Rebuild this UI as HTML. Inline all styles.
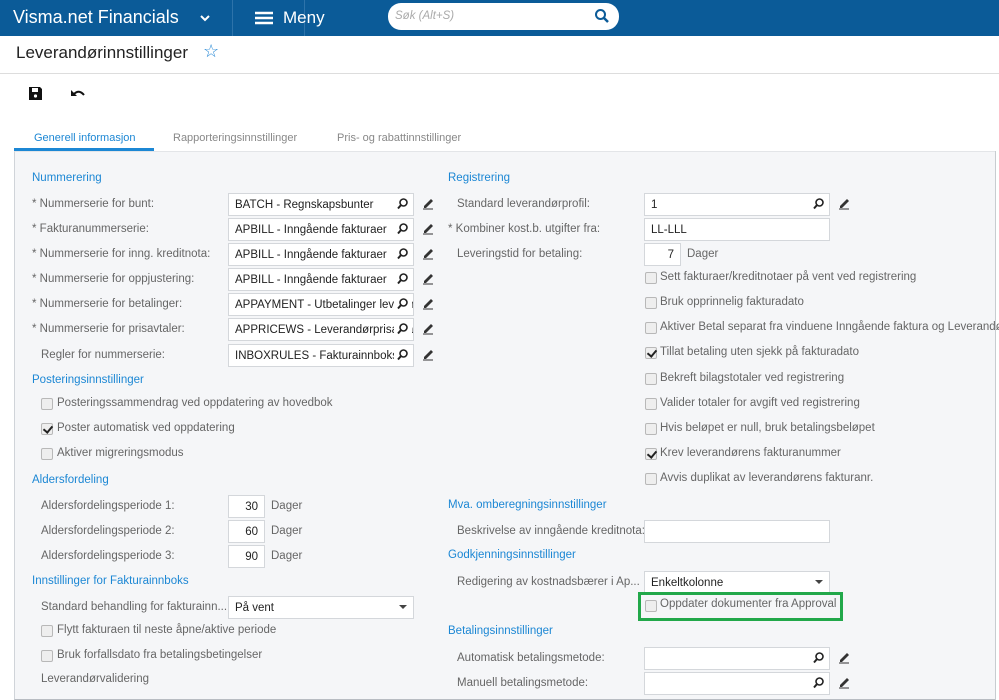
<!DOCTYPE html>
<html><head><meta charset="utf-8"><style>
*{margin:0;padding:0;box-sizing:border-box}
body{width:999px;height:700px;overflow:hidden;background:#fff;font-family:"Liberation Sans",sans-serif;position:relative;font-size:11.5px;color:#555}
.a{position:absolute;white-space:nowrap}
.hdr{position:absolute;left:0;top:0;width:999px;height:36px;background:#0b5b98}
.h{color:#1c87d4;font-size:11.5px}
.l{color:#666;font-size:11.5px}
.in{position:absolute;background:#fff;border:1px solid #d4d7db;height:23px;color:#222;font-size:11.5px;padding:5px 6px 3px 6px;white-space:nowrap;overflow:hidden}
.cb{position:absolute;width:12px;height:12px;border:1px solid #b8b8b8;border-radius:2px;background:#eee}
.ck::after{content:"";position:absolute;left:3px;top:0px;width:4px;height:7px;border:solid #222;border-width:0 2px 2px 0;transform:rotate(40deg)}
</style></head><body>
<div class="hdr"></div>
<div class="a" style="left:13px;top:7px;color:#fff;font-size:18px">Visma.net Financials</div>
<svg class="a" style="left:199px;top:14px" width="12" height="8"><path d="M2 2l4 4 4-4" stroke="#fff" stroke-width="2" fill="none"/></svg>
<div class="a" style="left:232px;top:0;width:1px;height:36px;background:#2d73aa"></div>
<div class="a" style="left:304px;top:0;width:1px;height:36px;background:#2d73aa"></div>
<svg class="a" style="left:255px;top:11px" width="18" height="14"><path d="M0 2h18M0 7h18M0 12h18" stroke="#fff" stroke-width="2.5"/></svg>
<div class="a" style="left:283px;top:8px;color:#fff;font-size:17px">Meny</div>
<div class="a" style="left:388px;top:3px;width:231px;height:27px;background:#fff;border-radius:13px"></div>
<div class="a" style="left:395px;top:10px;color:#aaa;font-size:11.5px;font-style:italic">Søk (Alt+S)</div>
<svg class="a" style="left:594px;top:8px" width="16" height="16"><circle cx="6.5" cy="6.5" r="4.5" stroke="#0b5b98" stroke-width="2" fill="none"/><path d="M10 10l4 4" stroke="#0b5b98" stroke-width="2.5"/></svg>
<div class="a" style="left:16px;top:43px;color:#222;font-size:17px">Leverandørinnstillinger</div>
<div class="a" style="left:203px;top:41px;color:#2a8ad6;font-size:18px">☆</div>
<div class="a" style="left:0;top:73px;width:999px;height:1px;background:#ddd"></div>
<svg class="a" style="left:29px;top:87px" width="13" height="13"><path d="M0 0h11l2 2v11H0z" fill="#111"/><rect x="3" y="1" width="6" height="4" fill="#fff"/><circle cx="6.5" cy="9" r="1.6" fill="#fff"/></svg>
<svg class="a" style="left:71px;top:88px" width="16" height="10"><path d="M3 6 Q8 1 13 7" stroke="#111" stroke-width="2" fill="none"/><path d="M0 2v6h6z" fill="#111"/></svg>
<div class="a" style="left:34px;top:132px;color:#1c87d4;font-size:11px">Generell informasjon</div>
<div class="a" style="left:173px;top:132px;color:#888;font-size:11px">Rapporteringsinnstillinger</div>
<div class="a" style="left:337px;top:132px;color:#888;font-size:11px">Pris- og rabattinnstillinger</div>
<div class="a" style="left:14px;top:151px;width:981px;height:549px;background:#f5f6f8;border-left:1px solid #d0d4d9;border-top:1px solid #e3e5e8;border-bottom:1px solid #b8bcc2"></div>
<div class="a" style="left:14px;top:148px;width:140px;height:3px;background:#1c87d4"></div>
<div class="a" style="left:995px;top:151px;width:1px;height:549px;background:#c8ccd0"></div>

<div style="position:absolute;left:0;top:1px;width:999px;height:699px">
<div class="a h" style="left:32px;top:171px">Nummerering</div>
<div class="a l" style="left:32px;top:197px">* Nummerserie for bunt:</div>
<div class="a l" style="left:32px;top:222px">* Fakturanummerserie:</div>
<div class="a l" style="left:32px;top:247px">* Nummerserie for inng. kreditnota:</div>
<div class="a l" style="left:32px;top:272px">* Nummerserie for oppjustering:</div>
<div class="a l" style="left:32px;top:297px">* Nummerserie for betalinger:</div>
<div class="a l" style="left:32px;top:322px">* Nummerserie for prisavtaler:</div>
<div class="a l" style="left:41px;top:348px">Regler for nummerserie:</div>
<div class="a h" style="left:32px;top:373px">Posteringsinnstillinger</div>
<div class="a l" style="left:57px;top:396px">Posteringssammendrag ved oppdatering av hovedbok</div>
<div class="a l" style="left:57px;top:421px">Poster automatisk ved oppdatering</div>
<div class="a l" style="left:57px;top:446px">Aktiver migreringsmodus</div>
<div class="a h" style="left:32px;top:473px">Aldersfordeling</div>
<div class="a l" style="left:41px;top:499px">Aldersfordelingsperiode 1:</div>
<div class="a l" style="left:41px;top:524px">Aldersfordelingsperiode 2:</div>
<div class="a l" style="left:41px;top:549px">Aldersfordelingsperiode 3:</div>
<div class="a l" style="left:271px;top:499px">Dager</div>
<div class="a l" style="left:271px;top:524px">Dager</div>
<div class="a l" style="left:271px;top:549px">Dager</div>
<div class="a h" style="left:32px;top:574px">Innstillinger for Fakturainnboks</div>
<div class="a l" style="left:41px;top:600px">Standard behandling for fakturainn...</div>
<div class="a l" style="left:57px;top:623px">Flytt fakturaen til neste åpne/aktive periode</div>
<div class="a l" style="left:57px;top:648px">Bruk forfallsdato fra betalingsbetingelser</div>
<div class="a l" style="left:41px;top:672px">Leverandørvalidering</div>
<div class="a h" style="left:448px;top:171px">Registrering</div>
<div class="a l" style="left:457px;top:197px">Standard leverandørprofil:</div>
<div class="a l" style="left:448px;top:222px">* Kombiner kost.b. utgifter fra:</div>
<div class="a l" style="left:457px;top:247px">Leveringstid for betaling:</div>
<div class="a l" style="left:687px;top:247px">Dager</div>
<div class="a l" style="left:660px;top:270px">Sett fakturaer/kreditnotaer på vent ved registrering</div>
<div class="a l" style="left:660px;top:295px">Bruk opprinnelig fakturadato</div>
<div class="a l" style="left:660px;top:320px">Aktiver Betal separat fra vinduene Inngående faktura og Leverandør</div>
<div class="a l" style="left:660px;top:345px">Tillat betaling uten sjekk på fakturadato</div>
<div class="a l" style="left:660px;top:371px">Bekreft bilagstotaler ved registrering</div>
<div class="a l" style="left:660px;top:396px">Valider totaler for avgift ved registrering</div>
<div class="a l" style="left:660px;top:421px">Hvis beløpet er null, bruk betalingsbeløpet</div>
<div class="a l" style="left:660px;top:446px">Krev leverandørens fakturanummer</div>
<div class="a l" style="left:660px;top:471px">Avvis duplikat av leverandørens fakturanr.</div>
<div class="a h" style="left:448px;top:498px">Mva. omberegningsinnstillinger</div>
<div class="a l" style="left:457px;top:524px">Beskrivelse av inngående kreditnota:</div>
<div class="a h" style="left:448px;top:548px">Godkjenningsinnstillinger</div>
<div class="a l" style="left:457px;top:575px">Redigering av kostnadsbærer i Ap...</div>
<div class="a l" style="left:660px;top:597px">Oppdater dokumenter fra Approval</div>
<div class="a h" style="left:448px;top:624px">Betalingsinnstillinger</div>
<div class="a l" style="left:457px;top:651px">Automatisk betalingsmetode:</div>
<div class="a l" style="left:457px;top:676px">Manuell betalingsmetode:</div>
</div>

<div class="in" style="left:228px;top:193px;width:186px">BATCH - Regnskapsbunter</div>
<div class="in" style="left:228px;top:218px;width:186px">APBILL - Inngående fakturaer</div>
<div class="in" style="left:228px;top:243px;width:186px">APBILL - Inngående fakturaer</div>
<div class="in" style="left:228px;top:268px;width:186px">APBILL - Inngående fakturaer</div>
<div class="in" style="left:228px;top:293px;width:186px">APPAYMENT - Utbetalinger leverandør</div>
<div class="in" style="left:228px;top:318px;width:186px">APPRICEWS - Leverandørprisavtaler</div>
<div class="in" style="left:228px;top:344px;width:186px">INBOXRULES - Fakturainnboks</div>
<div class="cb" style="left:41px;top:398px"></div>
<div class="cb ck" style="left:41px;top:423px"></div>
<div class="cb" style="left:41px;top:448px"></div>
<div class="in" style="left:228px;top:495px;width:37px;text-align:right">30</div>
<div class="in" style="left:228px;top:520px;width:37px;text-align:right">60</div>
<div class="in" style="left:228px;top:545px;width:37px;text-align:right">90</div>
<div class="in" style="left:228px;top:596px;width:186px">På vent</div>
<div class="cb" style="left:41px;top:625px"></div>
<div class="cb" style="left:41px;top:650px"></div>
<div class="in" style="left:644px;top:193px;width:186px">1</div>
<div class="in" style="left:644px;top:218px;width:186px">LL-LLL</div>
<div class="in" style="left:644px;top:243px;width:37px;text-align:right">7</div>
<div class="cb" style="left:645px;top:272px"></div>
<div class="cb" style="left:645px;top:297px"></div>
<div class="cb" style="left:645px;top:322px"></div>
<div class="cb ck" style="left:645px;top:347px"></div>
<div class="cb" style="left:645px;top:373px"></div>
<div class="cb" style="left:645px;top:398px"></div>
<div class="cb" style="left:645px;top:423px"></div>
<div class="cb ck" style="left:645px;top:448px"></div>
<div class="cb" style="left:645px;top:473px"></div>
<div class="in" style="left:644px;top:520px;width:186px"></div>
<div class="in" style="left:644px;top:571px;width:186px">Enkeltkolonne</div>
<div class="a" style="left:638px;top:592px;width:205px;height:29px;border:3px solid #22a84a"></div>
<div class="cb" style="left:645px;top:600px"></div>
<div class="in" style="left:644px;top:647px;width:186px"></div>
<div class="in" style="left:644px;top:672px;width:186px"></div>

<svg class="a" style="left:0;top:0" width="999" height="700">
<defs>
<g id="s"><rect x="-4" y="-4" width="18" height="19" fill="#fff"/><circle cx="5.5" cy="4.5" r="3.5" stroke="#222" stroke-width="1.6" fill="none"/><path d="M3 7l-3 3.5" stroke="#222" stroke-width="2"/></g>
<g id="p"><path d="M2 9l7-7 2 2-7 7H2z" fill="#333"/><path d="M1 12h10" stroke="#333" stroke-width="1"/></g>
<g id="d"><path d="M0 0h8l-4 4z" fill="#444"/></g>
</defs>
<use href="#s" x="398" y="198"/><use href="#s" x="398" y="223"/><use href="#s" x="398" y="248"/><use href="#s" x="398" y="273"/><use href="#s" x="398" y="298"/><use href="#s" x="398" y="323"/><use href="#s" x="398" y="349"/>
<use href="#p" x="422" y="197"/><use href="#p" x="422" y="222"/><use href="#p" x="422" y="247"/><use href="#p" x="422" y="272"/><use href="#p" x="422" y="297"/><use href="#p" x="422" y="322"/><use href="#p" x="422" y="348"/>
<use href="#s" x="814" y="198"/><use href="#p" x="838" y="197"/>
<use href="#s" x="814" y="652"/><use href="#p" x="838" y="651"/>
<use href="#s" x="814" y="677"/><use href="#p" x="838" y="676"/>
<use href="#d" x="399" y="605"/><use href="#d" x="815" y="580"/>
</svg>
</body></html>
